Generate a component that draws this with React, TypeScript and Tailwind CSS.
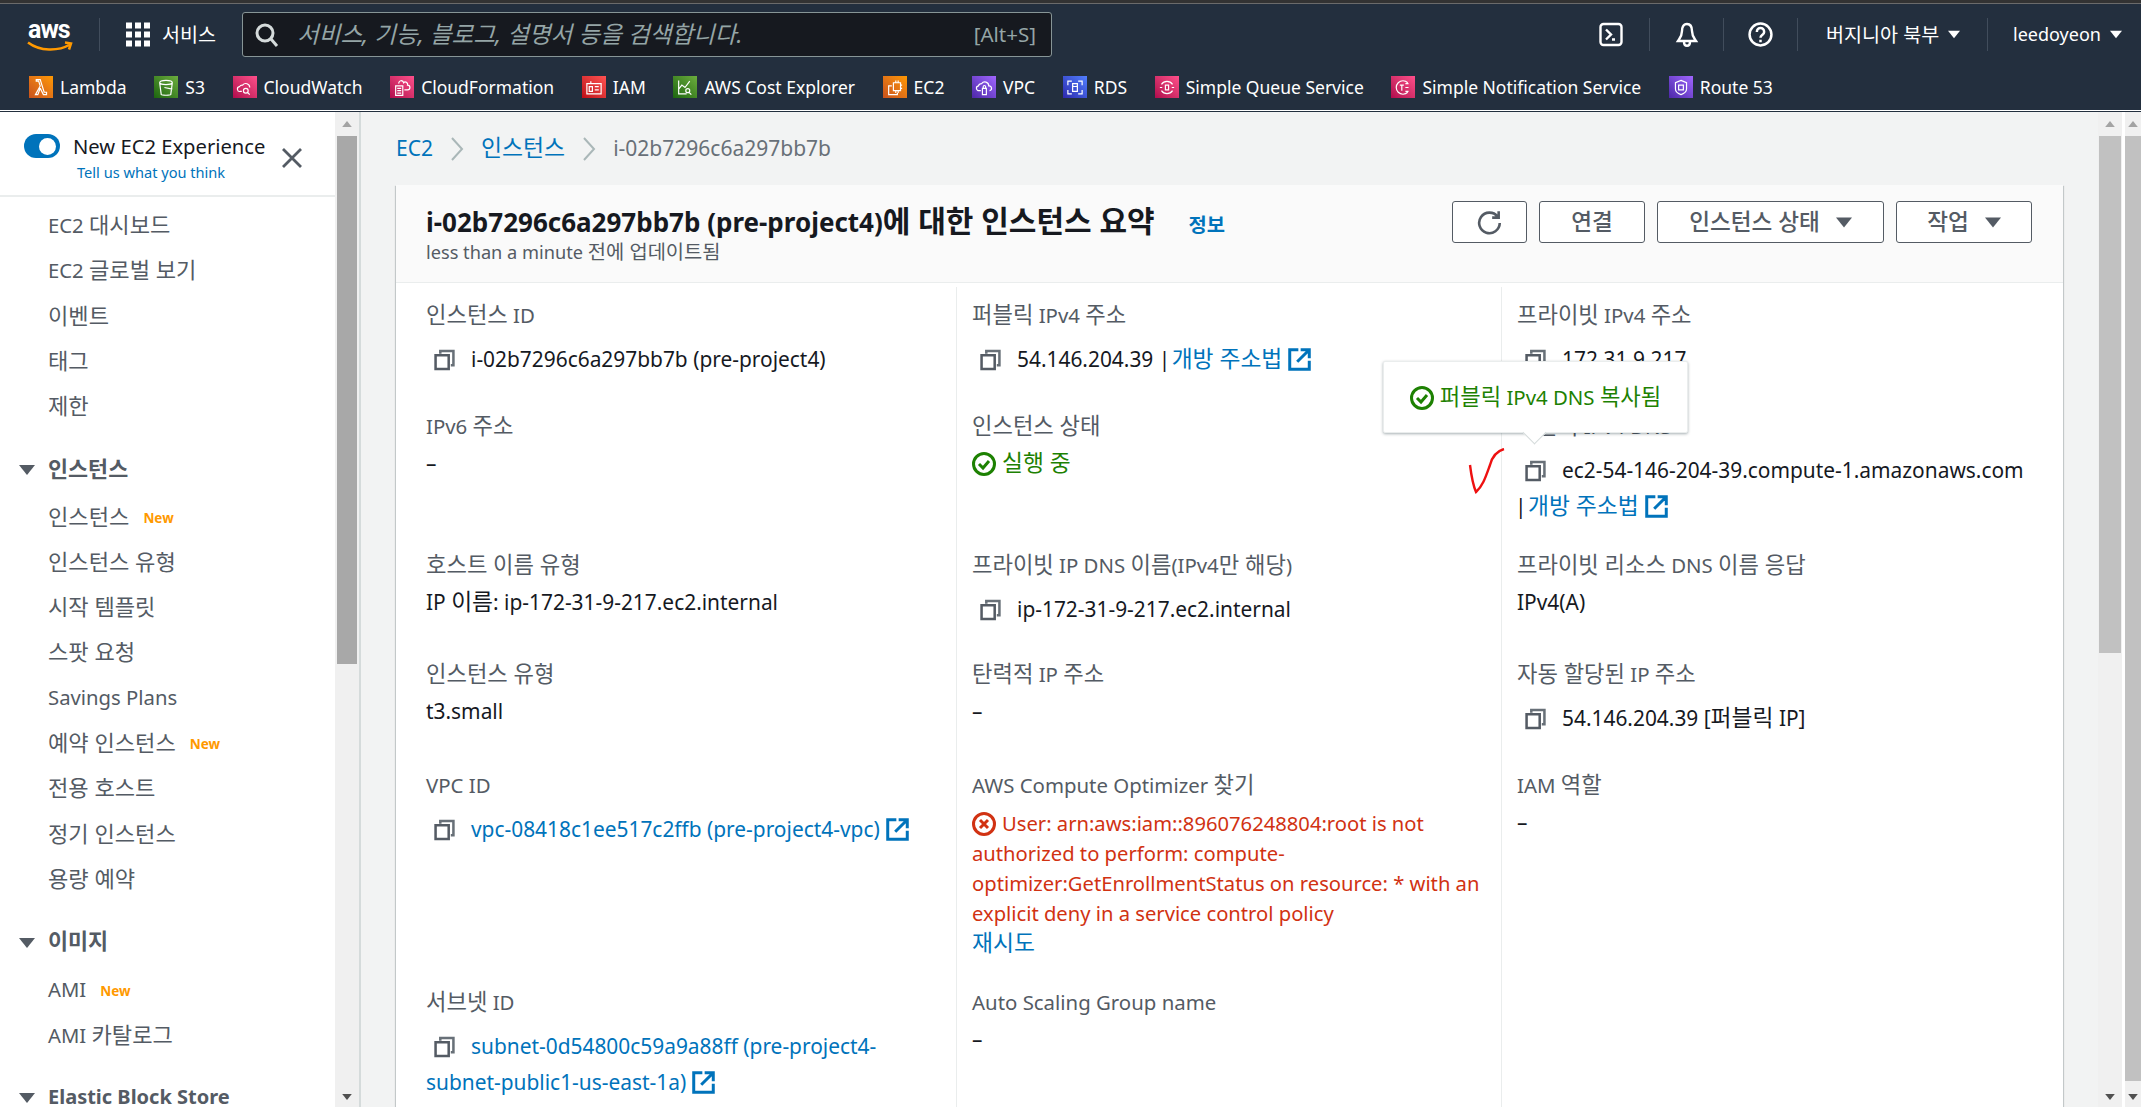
import type { ReactNode } from "react";

const FONT = "font-['Noto_Sans','Noto_Sans_CJK_KR',sans-serif]";

const services = [
  {
    name: "Lambda",
    bg: "bg-linear-to-tr from-[#c8511b] to-[#ff9900]",
    glyph: <path d="M5 21l6-11-2-6H6V2h5l5 16h3v3h-4L11 13 8 21z" />,
  },
  {
    name: "S3",
    bg: "bg-linear-to-tr from-[#1b660f] to-[#6cae3e]",
    glyph: <path d="M4 6c0-4 16-4 16 0l-2 15c-1 1-11 1-12 0zM4 6c1 3 15 3 16 0M10 12l10 2" />,
  },
  {
    name: "CloudWatch",
    bg: "bg-linear-to-tr from-[#b0084d] to-[#ff4f8b]",
    glyph: <path d="M8 17H6a3 3 0 0 1-1-6 4 4 0 0 1 4-2 5 5 0 0 1 9 3M10 16a3 3 0 1 0 6 0 3 3 0 1 0-6 0M15 18l3 3" />,
  },
  {
    name: "CloudFormation",
    bg: "bg-linear-to-tr from-[#b0084d] to-[#ff4f8b]",
    glyph: <path d="M4 10h9v12H4zM6 13h5M6 16h5M6 19h5M8 7a3 3 0 0 1 6-1 3 3 0 0 1 5 3 3 3 0 0 1 0 6h-4" />,
  },
  {
    name: "IAM",
    bg: "bg-linear-to-tr from-[#bd0816] to-[#ff5252]",
    glyph: <path d="M3 7h18v13H3zM6 11h4v6H6zM13 11h5M13 15h5M8 7V4" />,
  },
  {
    name: "AWS Cost Explorer",
    bg: "bg-linear-to-tr from-[#1b660f] to-[#6cae3e]",
    glyph: <path d="M4 3v17h10M4 14l4-5 4 3 6-8M13 16a2.500 2.500 0 1 0 5 0 2.500 2.500 0 1 0-5 0M17 18l3 3" />,
  },
  {
    name: "EC2",
    bg: "bg-linear-to-tr from-[#c8511b] to-[#ff9900]",
    glyph: <path d="M10 6h9v10h-9zM13 3v3M16 3v3M13 16v3M16 16v3M19 9h2M19 13h2M8 10H4v11h11v-2" />,
  },
  {
    name: "VPC",
    bg: "bg-linear-to-tr from-[#4d27a8] to-[#a166ff]",
    glyph: <path d="M8 16H6a3 3 0 0 1-1-6 4 4 0 0 1 4-3 5 5 0 0 1 9 3 3 3 0 0 1 1 6M10 13h5v8h-5zM11 13v-2a1.500 1.500 0 0 1 3 0v2" />,
  },
  {
    name: "RDS",
    bg: "bg-linear-to-tr from-[#2e27ad] to-[#527fff]",
    glyph: <path d="M9 7h6v10H9zM9 10c2 1 4 1 6 0M3 9V4h5M21 9V4h-5M3 15v5h5M21 15v5h-5" />,
  },
  {
    name: "Simple Queue Service",
    bg: "bg-linear-to-tr from-[#b0084d] to-[#ff4f8b]",
    glyph: <path d="M5 8a8.500 8.500 0 0 1 14 0M5 16a8.500 8.500 0 0 0 14 0M10 9h4v6h-4zM3 12h3M18 12h3" />,
  },
  {
    name: "Simple Notification Service",
    bg: "bg-linear-to-tr from-[#b0084d] to-[#ff4f8b]",
    glyph: <path d="M18 6a8.500 8.500 0 1 0 0 12M8 9h5M10.500 9v7M15 7h4M15 12h4M15 17h4" />,
  },
  {
    name: "Route 53",
    bg: "bg-linear-to-tr from-[#4d27a8] to-[#a166ff]",
    glyph: <path d="M12 3l7 3v8c0 4-4 6-7 7-3-1-7-3-7-7V6zM9 9h6v6H9z" />,
  },
];

type NavItem = { label: string; isNew?: boolean };

const navTop: NavItem[] = [
  { label: "EC2 대시보드" },
  { label: "EC2 글로벌 보기" },
  { label: "이벤트" },
  { label: "태그" },
  { label: "제한" },
];

const navInstances: NavItem[] = [
  { label: "인스턴스", isNew: true },
  { label: "인스턴스 유형" },
  { label: "시작 템플릿" },
  { label: "스팟 요청" },
  { label: "Savings Plans" },
  { label: "예약 인스턴스", isNew: true },
  { label: "전용 호스트" },
  { label: "정기 인스턴스" },
  { label: "용량 예약" },
];

const navImages: NavItem[] = [{ label: "AMI", isNew: true }, { label: "AMI 카탈로그" }];

// hangul in the original console font runs wider than latin, so bump those runs
function T({ children }: { children: string }) {
  const parts = children.split(/([가-힣]+(?:[ ,.]+[가-힣]+)*)/);
  return (
    <>
      {parts.map((p, i) =>
        i % 2 ? (
          <span key={i} className="text-[1.09em]">
            {p}
          </span>
        ) : (
          p
        )
      )}
    </>
  );
}

function Caret({ className }: { className: string }) {
  return (
    <svg viewBox="0 0 16 10" className={className} fill="currentColor">
      <path d="M0 0h16L8 10z" />
    </svg>
  );
}

function CopyIcon() {
  return (
    <svg viewBox="0 0 20 20" className="inline-block w-[21px] h-[22px] mr-[16px] ml-[8px] align-[-4px]" fill="none" stroke="#545b64" strokeWidth="2.400">
      <path d="M6 4V1.500h12.500V15H16" stroke="#687078" />
      <path d="M1.500 5.500h12.500v13H1.500z" />
    </svg>
  );
}

function ExternalIcon() {
  return (
    <svg viewBox="0 0 20 20" className="inline-block w-[23px] h-[23px] ml-[6px] align-[-4px]" fill="none" stroke="#0073bb" strokeWidth="2.600">
      <path d="M9 1.500H1.500v17h17V11M11 1.500h7.500V9M18.500 1.500L8 12" />
    </svg>
  );
}

function StatusIcon({ type }: { type: "ok" | "error" }) {
  const color = type === "ok" ? "#1d8102" : "#d13212";
  return (
    <svg viewBox="0 0 24 24" className="inline-block w-[24px] h-[24px] mr-[6px] align-[-5px]" fill="none" stroke={color} strokeWidth="3">
      <circle cx="12" cy="12" r="10.500" />
      {type === "ok" ? <path d="M7 12l4 4 6-7" /> : <path d="M8 8l8 8M16 8l-8 8" />}
    </svg>
  );
}

function NavLink({ item }: { item: NavItem }) {
  return (
    <div className="h-[45.3px] pl-[48px] flex items-center text-[20.3px] text-[#545b64]">
      <span>
        <T>{item.label}</T>
      </span>
      {item.isNew && <span className="ml-[14px] mt-[4px] text-[13.500px] font-bold text-[#ff9900]">New</span>}
    </div>
  );
}

function NavSection({ title }: { title: string }) {
  return (
    <div className="h-[45px] pl-[19px] flex items-center gap-[13px] text-[20px] font-bold text-[#545b64]">
      <Caret className="w-[16px] h-[12px] mt-[2px]" />
      <span>
        <T>{title}</T>
      </span>
    </div>
  );
}

function Field({ label, first, children }: { label: string; first?: boolean; children?: ReactNode }) {
  return (
    <div>
      <div className={`${first ? "pt-[13px]" : ""} leading-[30px] text-[20.4px] text-[#545b64]`}>
        <T>{label}</T>
      </div>
      {children}
    </div>
  );
}

function Plain({ children }: { children: ReactNode }) {
  return <div className="mt-[7px] leading-[30px] text-[#16191f]">{children}</div>;
}

function Copy({ children }: { children: ReactNode }) {
  return <div className="mt-[11px] leading-[36px] text-[#16191f]">{children}</div>;
}

function Scrollbar({ thumb, className }: { thumb: string; className: string }) {
  return (
    <div className={`flex flex-col items-center relative ${className}`}>
      <Caret className="w-[12px] h-[6px] mt-[9px] mb-[9px] rotate-180 text-[#a3a3a3] shrink-0" />
      <div className={`w-full shrink-0 ${thumb}`} />
      <Caret className="absolute bottom-[7px] w-[12px] h-[6px] text-[#505050]" />
    </div>
  );
}

export default function App() {
  return (
    <div className={`h-[1107px] w-[2141px] overflow-hidden flex flex-col bg-white ${FONT}`}>
      <div className="h-[3px] bg-[#333333]" />
      <div className="h-[1px] bg-[#6b6b6b]" />

      <header className="h-[106px] bg-[#232f3e] text-white flex flex-col">
        <div className="h-[60px] flex items-center pt-[1px]">
          <div className="w-[100px] h-[33px] border-r border-[#414d5c] pl-[28px] relative">
            <span className="block text-[25px] font-bold leading-[24px] tracking-[-1px] font-['Roboto',sans-serif]">aws</span>
            <svg viewBox="0 0 46 12" className="absolute left-[27px] top-[22px] w-[46px] h-[13px]" fill="none" stroke="#ff9900" strokeWidth="2.500">
              <path d="M1 2c12 9 30 9 42 2M38 2l6 1-2 6" />
            </svg>
          </div>
          <svg viewBox="0 0 24 24" className="ml-[26px] w-[24px] h-[25px]" fill="white">
            <path d="M0 0h6v6H0zM9 0h6v6H9zM18 0h6v6h-6zM0 9h6v6H0zM9 9h6v6H9zM18 9h6v6h-6zM0 18h6v6H0zM9 18h6v6H9zM18 18h6v6h-6z" />
          </svg>
          <span className="ml-[12px] w-[80px] text-[19.6px]">서비스</span>
          <div className="w-[810px] h-[45px] bg-[#16191f] border border-[#879596] rounded-[3px] flex items-center px-[12px]">
            <svg viewBox="0 0 24 24" className="w-[24px] h-[24px] shrink-0" fill="none" stroke="#d5dbdb" strokeWidth="3">
              <circle cx="10" cy="10" r="8" />
              <path d="M16 16l6 7" />
            </svg>
            <span className="ml-[18px] text-[23.600px] italic text-[#95a5a6] flex-1">서비스, 기능, 블로그, 설명서 등을 검색합니다.</span>
            <span className="text-[20.5px] text-[#95a5a6] mr-[3px]">[Alt+S]</span>
          </div>
          <div className="ml-auto flex items-center h-[33px]">
            <div className="w-[77px] h-full flex items-center justify-center">
              <svg viewBox="0 0 24 24" className="w-[24px] h-[25px]" fill="none" stroke="white" strokeWidth="2.400">
                <rect x="1.500" y="1.500" width="21" height="21" rx="3" />
                <path d="M7 7l5 5-5 5M13 17h3" />
              </svg>
            </div>
            <div className="w-[74px] h-full border-l border-[#414d5c] flex items-center justify-center">
              <svg viewBox="0 0 24 26" className="w-[24px] h-[26px]" fill="none" stroke="white" strokeWidth="2.400">
                <path d="M12 2c-4 0-5 4-5 7 0 5-2 7-4 10h18c-2-3-4-5-4-10 0-3-1-7-5-7zM9 20c0 5 6 5 6 0" />
              </svg>
            </div>
            <div className="w-[74px] h-full border-l border-[#414d5c] flex items-center justify-center">
              <svg viewBox="0 0 24 24" className="w-[25px] h-[25px]" fill="none" stroke="white" strokeWidth="2.400">
                <circle cx="12" cy="12" r="10.500" />
                <path d="M8.500 9.500c0-5 7-5 7 0 0 3-3.500 3-3.500 5.500M12 17v2.500" />
              </svg>
            </div>
            <div className="w-[190px] h-full border-l border-[#414d5c] flex items-center pl-[28px] text-[19.6px]">
              버지니아 북부
              <Caret className="w-[12px] h-[9px] ml-[9px]" />
            </div>
            <div className="w-[154px] h-full border-l border-[#414d5c] flex items-center pl-[25px] text-[18px]">
              leedoyeon
              <Caret className="w-[12px] h-[9px] ml-[9px]" />
            </div>
          </div>
        </div>
        <div className="flex items-center gap-[27.6px] pl-[29px] mt-[10px]">
          {services.map((s) => (
            <div key={s.name} className="flex items-center gap-[7px]">
              <div className={`w-[24px] h-[22px] flex items-center justify-center ${s.bg}`}>
                <svg viewBox="0 0 24 24" className="w-[20px] h-[19px]" fill="none" stroke="white" strokeWidth="1.500">
                  {s.glyph}
                </svg>
              </div>
              <span className="text-[17.500px] whitespace-nowrap">{s.name}</span>
            </div>
          ))}
        </div>
      </header>
      <div className="h-[1px] bg-white" />
      <div className="h-[1px] bg-[#232f3e]" />

      <div className="flex-1 flex min-h-0">
        <aside className="w-[335px] shrink-0 overflow-hidden">
          <div className="h-[85px] border-b-2 border-[#eaeded] relative">
            <div className="absolute left-[24px] top-[22px] w-[36px] h-[24px] rounded-full bg-[#0073bb] flex items-center justify-end pr-[4px]">
              <div className="w-[17px] h-[17px] rounded-full bg-white" />
            </div>
            <div className="absolute left-[73px] top-[20px] text-[20.2px] leading-[28px] text-[#16191f] whitespace-nowrap">New EC2 Experience</div>
            <div className="absolute left-[77px] top-[49px] text-[14.600px] leading-[22px] text-[#0073bb] whitespace-nowrap">Tell us what you think</div>
            <svg viewBox="0 0 20 20" className="absolute left-[282px] top-[36px] w-[20px] h-[20px]" fill="none" stroke="#545b64" strokeWidth="2.800">
              <path d="M1 1l18 18M19 1L1 19" />
            </svg>
          </div>
          <nav className="pt-[5px]">
            {navTop.map((i) => (
              <NavLink key={i.label} item={i} />
            ))}
            <div className="mt-[18px]">
              <NavSection title="인스턴스" />
            </div>
            <div className="mt-[2px]">
              {navInstances.map((i) => (
                <NavLink key={i.label} item={i} />
              ))}
            </div>
            <div className="mt-[18px]">
              <NavSection title="이미지" />
            </div>
            <div className="mt-[2px]">
              {navImages.map((i) => (
                <NavLink key={i.label} item={i} />
              ))}
            </div>
            <div className="mt-[18px]">
              <NavSection title="Elastic Block Store" />
            </div>
          </nav>
        </aside>
        <Scrollbar className="w-[24px] shrink-0 bg-[#f0f0f0] px-[2px]" thumb="h-[528px] bg-[#a8a8a8]" />
        <div className="w-[2px] shrink-0 bg-[#d5dbdb]" />

        <main className="flex-1 min-w-0 bg-[#f2f3f3] pl-[35px] pr-[35px] text-[20.9px] overflow-hidden">
          <div className="h-[73px] flex items-center text-[21px]">
            <span className="text-[#0073bb]">EC2</span>
            <svg viewBox="0 0 14 24" className="w-[14px] h-[24px] mx-[17px]" fill="none" stroke="#aab7b8" strokeWidth="2">
              <path d="M2 1l10 11L2 23" />
            </svg>
            <span className="text-[#0073bb]">
              <T>인스턴스</T>
            </span>
            <svg viewBox="0 0 14 24" className="w-[14px] h-[24px] mx-[17px]" fill="none" stroke="#aab7b8" strokeWidth="2">
              <path d="M2 1l10 11L2 23" />
            </svg>
            <span className="text-[#687078]">i-02b7296c6a297bb7b</span>
          </div>

          <section className="relative bg-white h-[1000px] shadow-[0_1px_1px_0_rgba(0,28,36,0.3),1px_1px_1px_0_rgba(0,28,36,0.15),-1px_1px_1px_0_rgba(0,28,36,0.15)]">
            <div className="h-[98px] bg-[#fafafa] border-b border-[#eaeded] flex pl-[30px] pr-[31px]">
              <div className="pt-[18px]">
                <div className="flex items-baseline">
                  <h1 className="text-[26px] leading-[36px] font-bold text-[#16191f] whitespace-nowrap">
                    i-02b7296c6a297bb7b (pre-project4)<span className="text-[30px]">에 대한 인스턴스 요약</span>
                  </h1>
                  <span className="ml-[34px] text-[18.2px] font-bold text-[#0073bb]">
                    <T>정보</T>
                  </span>
                </div>
                <div className="text-[18.2px] leading-[24px] text-[#545b64]">
                  <T>less than a minute 전에 업데이트됨</T>
                </div>
              </div>
              <div className="ml-auto mt-[16px] flex gap-[12px] h-[42px] text-[22.6px] font-medium text-[#545b64]">
                <button className="w-[75px] bg-white border border-[#545b64] rounded-[3px] flex items-center justify-center">
                  <svg viewBox="0 0 24 24" className="w-[26px] h-[26px]" fill="none" stroke="#545b64" strokeWidth="2.400">
                    <path d="M19 7a9.500 9.500 0 1 0 2 6M20 2v6h-6" />
                  </svg>
                </button>
                <button className="w-[106px] bg-white border border-[#545b64] rounded-[3px]">연결</button>
                <button className="w-[227px] bg-white border border-[#545b64] rounded-[3px] flex items-center justify-center gap-[16px]">
                  인스턴스 상태
                  <Caret className="w-[16px] h-[13px]" />
                </button>
                <button className="w-[136px] bg-white border border-[#545b64] rounded-[3px] flex items-center justify-center gap-[16px]">
                  작업
                  <Caret className="w-[16px] h-[13px]" />
                </button>
              </div>
            </div>

            <div className="mt-[4px] grid grid-cols-[560px_545px_562px] grid-rows-[124px_139px_109px_111px_217px_240px]">
              <div className="pl-[30px]">
                <Field label="인스턴스 ID" first>
                  <Copy>
                    <CopyIcon />
                    i-02b7296c6a297bb7b (pre-project4)
                  </Copy>
                </Field>
              </div>
              <div className="pl-[15px] pr-[16px] border-l border-[#eaeded]">
                <Field label="퍼블릭 IPv4 주소" first>
                  <Copy>
                    <CopyIcon />
                    54.146.204.39 | <span className="ml-[-4px] text-[#0073bb] text-[1.09em]">개방 주소법</span>
                    <ExternalIcon />
                  </Copy>
                </Field>
              </div>
              <div className="pl-[15px] pr-[16px] border-l border-[#eaeded]">
                <Field label="프라이빗 IPv4 주소" first>
                  <Copy>
                    <CopyIcon />
                    172.31.9.217
                  </Copy>
                </Field>
              </div>

              <div className="pl-[30px]">
                <Field label="IPv6 주소">
                  <Plain>–</Plain>
                </Field>
              </div>
              <div className="pl-[15px] pr-[16px] border-l border-[#eaeded]">
                <Field label="인스턴스 상태">
                  <Plain>
                    <span className="text-[#1d8102]">
                      <StatusIcon type="ok" />
                      <T>실행 중</T>
                    </span>
                  </Plain>
                </Field>
              </div>
              <div className="pl-[15px] pr-[16px] border-l border-[#eaeded]">
                <Field label="퍼블릭 IPv4 DNS">
                  <Copy>
                    <CopyIcon />
                    ec2-54-146-204-39.compute-1.amazonaws.com
                    <br />
                    <span className="ml-[-2px]">|</span> <span className="ml-[-4px] text-[#0073bb] text-[1.09em]">개방 주소법</span>
                    <ExternalIcon />
                  </Copy>
                </Field>
              </div>

              <div className="pl-[30px]">
                <Field label="호스트 이름 유형">
                  <Plain>
                    <T>IP 이름: ip-172-31-9-217.ec2.internal</T>
                  </Plain>
                </Field>
              </div>
              <div className="pl-[15px] pr-[16px] border-l border-[#eaeded]">
                <Field label="프라이빗 IP DNS 이름(IPv4만 해당)">
                  <Copy>
                    <CopyIcon />
                    ip-172-31-9-217.ec2.internal
                  </Copy>
                </Field>
              </div>
              <div className="pl-[15px] pr-[16px] border-l border-[#eaeded]">
                <Field label="프라이빗 리소스 DNS 이름 응답">
                  <Plain>IPv4(A)</Plain>
                </Field>
              </div>

              <div className="pl-[30px]">
                <Field label="인스턴스 유형">
                  <Plain>t3.small</Plain>
                </Field>
              </div>
              <div className="pl-[15px] pr-[16px] border-l border-[#eaeded]">
                <Field label="탄력적 IP 주소">
                  <Plain>–</Plain>
                </Field>
              </div>
              <div className="pl-[15px] pr-[16px] border-l border-[#eaeded]">
                <Field label="자동 할당된 IP 주소">
                  <Copy>
                    <CopyIcon />
                    <T>54.146.204.39 [퍼블릭 IP]</T>
                  </Copy>
                </Field>
              </div>

              <div className="pl-[30px]">
                <Field label="VPC ID">
                  <Copy>
                    <CopyIcon />
                    <span className="text-[#0073bb]">vpc-08418c1ee517c2ffb (pre-project4-vpc)</span>
                    <ExternalIcon />
                  </Copy>
                </Field>
              </div>
              <div className="pl-[15px] pr-[16px] border-l border-[#eaeded]">
                <Field label="AWS Compute Optimizer 찾기">
                  <div className="mt-[8px] leading-[30px] text-[20.2px] text-[#d13212]">
                    <StatusIcon type="error" />
                    User: arn:aws:iam::896076248804:root is not authorized to perform: compute-optimizer:GetEnrollmentStatus on resource: * with an explicit deny in a service control policy
                  </div>
                  <div className="leading-[30px] text-[#0073bb]">
                    <T>재시도</T>
                  </div>
                </Field>
              </div>
              <div className="pl-[15px] pr-[16px] border-l border-[#eaeded]">
                <Field label="IAM 역할">
                  <Plain>–</Plain>
                </Field>
              </div>

              <div className="pl-[30px] pr-[40px]">
                <Field label="서브넷 ID">
                  <Copy>
                    <CopyIcon />
                    <span className="text-[#0073bb]">subnet-0d54800c59a9a88ff (pre-project4-subnet-public1-us-east-1a)</span>
                    <ExternalIcon />
                  </Copy>
                </Field>
              </div>
              <div className="pl-[15px] pr-[16px] border-l border-[#eaeded]">
                <Field label="Auto Scaling Group name">
                  <Plain>–</Plain>
                </Field>
              </div>
              <div className="border-l border-[#eaeded]" />
            </div>

            {/* copied tooltip */}
            <div className="absolute left-[987px] top-[176px] w-[305px] h-[72px] bg-white rounded-[2px] border border-[#eaeded] shadow-[0_1px_3px_rgba(0,28,36,0.35)] flex items-center justify-center text-[#1d8102] text-[20.4px]">
              <span className="whitespace-nowrap">
                <StatusIcon type="ok" />
                <T>퍼블릭 IPv4 DNS 복사됨</T>
              </span>
              <div className="absolute left-[142px] bottom-[-9px] w-[17px] h-[17px] rotate-45 bg-white border-r border-b border-[#d5dbdb]" />
            </div>

            {/* red pen mark on the screenshot */}
            <svg viewBox="0 0 40 46" className="absolute left-[1072px] top-[263px] w-[40px] h-[46px]" fill="none" stroke="#ee1111" strokeWidth="2.400">
              <path d="M2 17c1 8 3 20 6 27 7-6 10-16 14-27 2-8 7-14 14-16" />
            </svg>
          </section>
        </main>

        <Scrollbar className="w-[24px] shrink-0 bg-[#f0f0f0] px-[1px]" thumb="h-[517px] bg-[#c1c1c1]" />
        <div className="w-[3px] shrink-0 bg-white" />
        <Scrollbar className="w-[16px] shrink-0 bg-[#f0f0f0]" thumb="h-[945px] bg-[#c1c1c1]" />
      </div>
    </div>
  );
}
